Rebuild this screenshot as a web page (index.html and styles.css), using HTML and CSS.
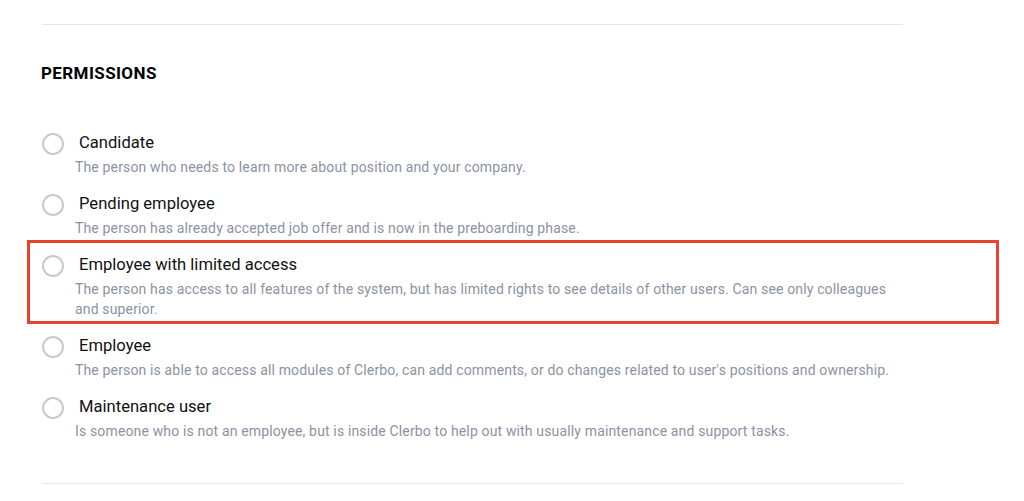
FILE: index.html
```html
<!DOCTYPE html>
<html lang="en">
<head>
<meta charset="utf-8">
<title>Permissions</title>
<link rel="stylesheet" href="styles.css">
</head>
<body>
<section class="panel">
  <div class="divider"></div>
  <h2 class="heading">PERMISSIONS</h2>
  <ul class="options">
    <li class="option">
      <span class="radio"></span>
      <div class="text">
        <div class="title">Candidate</div>
        <div class="desc">The person who needs to learn more about position and your company.</div>
      </div>
    </li>
    <li class="option">
      <span class="radio"></span>
      <div class="text">
        <div class="title">Pending employee</div>
        <div class="desc">The person has already accepted job offer and is now in the preboarding phase.</div>
      </div>
    </li>
    <li class="option highlight">
      <span class="radio"></span>
      <div class="text">
        <div class="title">Employee with limited access</div>
        <div class="desc">The person has access to all features of the system, but has limited rights to see details of other users. Can see only colleagues and superior.</div>
      </div>
    </li>
    <li class="option">
      <span class="radio"></span>
      <div class="text">
        <div class="title">Employee</div>
        <div class="desc">The person is able to access all modules of Clerbo, can add comments, or do changes related to user's positions and ownership.</div>
      </div>
    </li>
    <li class="option">
      <span class="radio"></span>
      <div class="text">
        <div class="title">Maintenance user</div>
        <div class="desc">Is someone who is not an employee, but is inside Clerbo to help out with usually maintenance and support tasks.</div>
      </div>
    </li>
  </ul>
  <div class="divider bottom"></div>
</section>
</body>
</html>
```

FILE: styles.css
```css
* { box-sizing: border-box; }
html, body { margin: 0; padding: 0; background: #ffffff; }
body {
  font-family: Roboto, "Liberation Sans", Arial, sans-serif;
  color: #141414;
}
.panel {
  width: 903px;
  padding: 24px 0 0 42px;
}
.divider {
  height: 1px;
  background: #e6e6e8;
}
.heading {
  margin: 38px 0 0 -1px;
  font-size: 17px;
  line-height: 20px;
  font-weight: 700;
  letter-spacing: 0.4px;
  color: #000;
}
.options {
  list-style: none;
  margin: 49px 0 0 0;
  padding: 0;
  display: flex;
  flex-direction: column;
  gap: 16px;
}
.option {
  display: flex;
  align-items: flex-start;
}
.radio {
  flex: none;
  width: 22px;
  height: 22px;
  margin-top: 1px;
  border: 2px solid #c9c9cc;
  border-radius: 50%;
  background: #fff;
}
.text {
  flex: 1;
  margin-left: 11px;
}
.title {
  padding-left: 4px;
  font-size: 16.6px;
  line-height: 22px;
  color: #111;
}
.desc {
  margin-top: 3px;
  font-size: 14px;
  line-height: 20px;
  letter-spacing: 0.15px;
  color: #8a93a3;
}
.highlight { position: relative; }
.highlight::after {
  content: "";
  position: absolute;
  top: -14px;
  bottom: -5px;
  left: -15px;
  right: -96px;
  border: 3px solid #e8432f;
  pointer-events: none;
}
.divider.bottom { margin-top: 42px; }
```
